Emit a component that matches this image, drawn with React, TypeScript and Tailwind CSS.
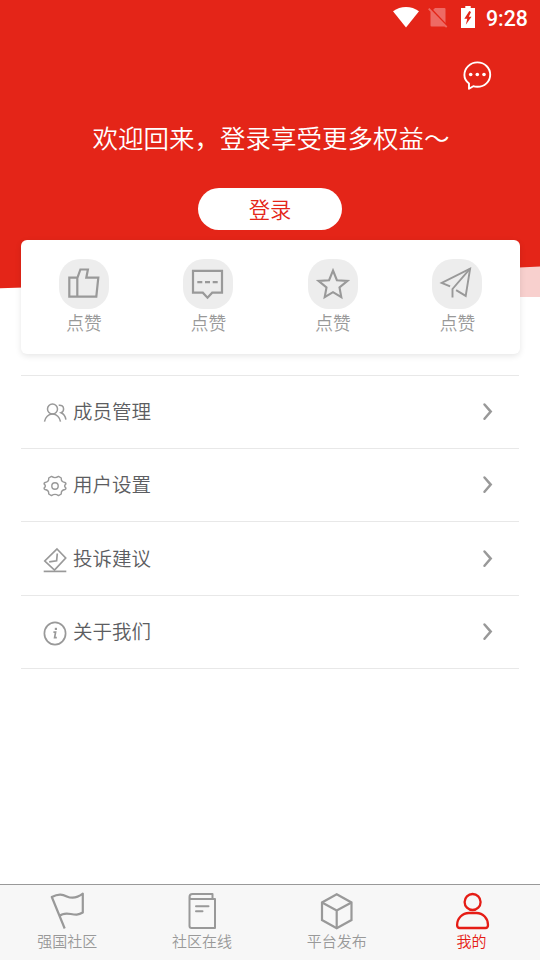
import React from 'react';

const ThumbIcon = () => (
    <svg width="50" height="50" viewBox="0 0.5 50 50" fill="none" stroke="#999" strokeWidth="2.2">
        <path d="M10.300 19.2h8v19h-8zM18.300 38.200h19l2-19H27.300l1.600-8.200h-7.500L18.300 19.600z" />
    </svg>
);

const CommentIcon = () => (
    <svg width="50" height="50" viewBox="0.5 0.5 50 50" fill="none" stroke="#999" strokeWidth="2.2">
        <path d="M10.500 12.300h29v21.900h-9.800l-4.700 5-4.700-5h-9.800z" />
        <path d="M14.800 23.700h5M22.500 23.700h5M30.200 23.700h5" />
    </svg>
);

const StarIcon = () => (
    <svg width="50" height="50" viewBox="0 0.5 50 50" fill="none" stroke="#999" strokeWidth="2.100">
        <path d="M25 12l3.900 9.700 10.600.7-8 6.600 1.800 9.700-8.300-5-8.300 5 1.800-9.700-8-6.600 10.600-.7z" />
    </svg>
);

const PlaneIcon = () => (
    <svg width="50" height="50" viewBox="0.3 0.5 50 50" fill="none" stroke="#999" strokeWidth="1.9">
        <path d="M18.400 27.800L10 24.300 38.400 10.200 34 37.400l-9.600-5.800" />
        <path d="M38.400 10.200L20.800 30.500v8.600" />
    </svg>
);

const MembersIcon = () => (
    <svg width="24" height="24" viewBox="0 0 24 24" fill="none" stroke="#999" strokeWidth="1.5">
        <circle cx="9.500" cy="8" r="5" />
        <path d="M1.500 20.700c.6-4.600 4-7.600 8-7.600s7.400 3 8 7.600" />
        <path d="M15.700 4.200c2.800-.4 4.900 1 4.900 3.700 0 1.900-1 3.200-2.600 3.900 2.700 1 4.300 3.200 4.900 6.900" />
    </svg>
);

const GearIcon = () => (
    <svg width="24" height="24" viewBox="0 0 24 24" fill="none" stroke="#999" strokeWidth="1.4" strokeLinejoin="round">
        <circle cx="12" cy="12" r="3.200" />
        <path d="M8.500 2.400C10.500 3.800 13.500 3.800 15.500 2.400L18.300 4C18 6.500 19 8 21.900 8.500Q23.200 9 22.800 10.100C21.200 11.500 21.200 12.500 22.800 13.900Q23.200 15 21.900 15.500C19 16 18 17.500 18.300 20L15.500 21.600C13.500 20.200 10.500 20.200 8.500 21.600L5.700 20C6 17.500 5 16 2.100 15.500Q.8 15 1.200 13.900C2.800 12.500 2.800 11.500 1.200 10.100Q.8 9 2.100 8.500C5 8 6 6.500 5.700 4z" />
    </svg>
);

const SuggestIcon = () => (
    <svg width="24" height="26" viewBox="0 0 24 26" fill="none" stroke="#999" strokeWidth="1.700">
        <path d="M14 2l8.700 9-11.200 12L1.800 14z" />
        <path d="M14.300 6.500l-.7 7.300-7.400 1" />
        <path d="M.7 24.400h22.600" />
    </svg>
);

const InfoIcon = () => (
    <svg width="24" height="25" viewBox="0 0 24 25" fill="none" stroke="#999" strokeWidth="1.700">
        <ellipse cx="12" cy="12.500" rx="10.600" ry="11.200" />
        <path d="M12.900 6.800v2.200" strokeWidth="2.200" />
        <path d="M10.400 11.200h2.200l-1 5.500h2.200" strokeWidth="1.700" />
    </svg>
);

const ArrowIcon = () => (
    <svg width="12" height="20" viewBox="0 0 12 20" fill="none" stroke="#999" strokeWidth="2.500" strokeLinecap="round">
        <path d="M2.500 3.500L8.700 10.600 2.500 17.700" />
    </svg>
);

const FlagIcon = () => (
    <svg width="36" height="38" viewBox="-0.8 0 36 38" fill="none" stroke="#999" strokeWidth="2.200" strokeLinejoin="round">
        <path d="M14.900 36.500L2 5c7-3.800 11-2.500 15-.6 5 2.300 10.500 1.500 16-2.700V20.500c-4.500 2.800-7.500 2.300-12 1.500-5-.9-8.500-.6-11.300 2" />
    </svg>
);

const BookIcon = () => (
    <svg width="36" height="38" viewBox="-0.5 0 36 38" fill="none" stroke="#999" strokeWidth="2" strokeLinejoin="round">
        <path d="M28 7V2H8Q5 2 5 5v29q0 2 2 2h23.500V7H7Q5 7 5 5" />
        <path d="M11.500 14.300h12.500M11.500 19.300h6.500" strokeLinecap="round" />
    </svg>
);

const BoxIcon = () => (
    <svg width="36" height="38" viewBox="0 0 36 38" fill="none" stroke="#999" strokeWidth="2.200">
        <path d="M17.700 2.200l14.800 8.300v17.500l-14.800 8.300L3 28V10.500z" />
        <path d="M3 10.500l14.700 8 14.800-8M17.700 18.500v17.500" />
    </svg>
);

const PersonIcon = () => (
    <svg width="36" height="38" viewBox="-0.400 0 36 38" fill="none" stroke="#e51c15" strokeWidth="2.300">
        <circle cx="18.200" cy="10" r="8" />
        <path d="M14.500 21h7.600c6.500 0 11.500 5.500 11.500 12 0 1.900-.9 3-2.600 3H5.300c-1.600 0-2.600-1.100-2.600-3C2.700 26.500 8 21 14.500 21z" />
    </svg>
);

const actions = [
    { id: 1, icon: <ThumbIcon />, label: '点赞' },
    { id: 2, icon: <CommentIcon />, label: '点赞' },
    { id: 3, icon: <StarIcon />, label: '点赞' },
    { id: 4, icon: <PlaneIcon />, label: '点赞' },
];

const menus = [
    { icon: <MembersIcon />, label: '成员管理', height: 'h-[73px]' },
    { icon: <GearIcon />, label: '用户设置', height: 'h-[73px]' },
    { icon: <SuggestIcon />, label: '投诉建议', height: 'h-[74px]' },
    { icon: <InfoIcon />, label: '关于我们', height: 'h-[73px]' },
];

const tabs = [
    { icon: <FlagIcon />, label: '强国社区', active: false },
    { icon: <BookIcon />, label: '社区在线', active: false },
    { icon: <BoxIcon />, label: '平台发布', active: false },
    { icon: <PersonIcon />, label: '我的', active: true },
];

const StatusBar = () => (
    <div className="flex h-9 items-center justify-end pr-3 text-white">
        <svg className="-mt-0.5" width="26" height="21" viewBox="0 0 26 21" fill="#fff">
            <path d="M0 4.300C7.500-1.400 18.500-1.400 26 4.300L13 20.500z" />
        </svg>
        <svg className="-mt-0.5 ml-[9px]" width="20" height="22" viewBox="0 -0.5 20 22">
            <path d="M7 1.500h9.500q1 0 1 1V20h-14q-1 0-1-1V6z" fill="#ee6a64" />
            <path d="M1.500 1l18 19" stroke="#e42518" strokeWidth="2" />
            <path d="M.7 2.200l18 18.500" stroke="#ee6a64" strokeWidth="1.800" />
        </svg>
        <svg className="-mt-0.5 ml-[13px]" width="14" height="22" viewBox="0 0 14 22">
            <path d="M4.300 0h5.400v2H14v20H0V2h4.300z" fill="#fff" />
            <path d="M8.300 5L3.300 12.800h3l-1.500 6 5.700-8H7.800L10 6z" fill="#e42518" />
        </svg>
        <span className="mt-0.5 ml-[11px] w-[42px] font-[Roboto] text-[21.300px] font-medium leading-none whitespace-nowrap">9:28</span>
    </div>
);

const App: React.FC = () => {
    return (
        <div className="relative flex h-[960px] w-[540px] flex-col overflow-hidden bg-white font-['Noto_Sans_CJK_SC',sans-serif] font-[350]">
            {/* red wave behind the header */}
            <svg className="absolute top-0 left-0" width="540" height="300" viewBox="0 0 540 300">
                <path d="M300 240h240v57H300z" fill="#f8d0ce" />
                <path d="M0 0h540v266.500Q500 268 450 272L200 282 0 288.300z" fill="#e42518" />
            </svg>

            <header className="relative flex h-60 flex-col items-center">
                <div className="w-full">
                    <StatusBar />
                </div>
                <div className="flex w-full justify-end pt-6 pr-12">
                    <svg width="30" height="30" viewBox="0 0 30 30" fill="none" stroke="#fff" strokeWidth="1.900">
                        <path d="M7 28.700V23.500C4 21.300 2.400 18.300 2.400 15 2.400 8 8.200 2.400 15.400 2.400S28.200 7.800 28.200 14.700 22.500 26.800 15.300 26.800c-1.600 0-3-.2-4-.6z" strokeLinejoin="round" />
                        <g fill="#fff" stroke="none">
                            <circle cx="8.700" cy="14.500" r="1.800" />
                            <circle cx="15.300" cy="14.500" r="1.800" />
                            <circle cx="22" cy="14.500" r="1.800" />
                        </g>
                    </svg>
                </div>
                <h1 className="mt-[27px] h-10 pl-0.5 text-[25.500px] leading-10 whitespace-nowrap text-white">欢迎回来，登录享受更多权益～</h1>
                <button className="mt-[30.500px] h-[42px] w-36 rounded-full bg-white text-[21.300px] leading-[42px] text-[#e42518]">登录</button>
            </header>

            <section className="relative ml-[21px] grid h-[114px] w-[499.400px] grid-cols-4 rounded-md bg-white px-[0.7px] pt-[18.500px] shadow-[0_2px_6px_rgba(0,0,0,0.1)]">
                {actions.map(item => (
                    <div key={item.id} className="flex flex-col items-center">
                        <div className="h-[50px] w-[50px] rounded-[21px] bg-[#ededed]">{item.icon}</div>
                        <span className="mt-[1.500px] text-[17.800px] leading-6 text-[#999]">{item.label}</span>
                    </div>
                ))}
            </section>

            <ul className="mt-[21px] ml-[21px] w-[498px] border-t border-[#e8e8e8]">
                {menus.map(menu => (
                    <li key={menu.label} className={`${menu.height} flex items-center border-b border-[#e8e8e8] pr-[25px] pb-0.5 pl-[22px]`}>
                        <span className="mt-1">{menu.icon}</span>
                        <span className="ml-[6px] flex-1 text-[19.500px] leading-7 text-[#5c5d61]">{menu.label}</span>
                        <ArrowIcon />
                    </li>
                ))}
            </ul>

            <nav className="mt-auto grid h-[76px] grid-cols-4 border-t border-[#999] bg-[#f7f7f7] pt-[7px] pr-px">
                {tabs.map(tab => (
                    <a key={tab.label} className="flex flex-col items-center">
                        {tab.icon}
                        <span className={tab.active ? '-mt-px text-[15px] leading-6 text-[#e51c15]' : '-mt-px text-[15px] leading-6 text-[#999]'}>
                            {tab.label}
                        </span>
                    </a>
                ))}
            </nav>
        </div>
    );
};

export default App;
